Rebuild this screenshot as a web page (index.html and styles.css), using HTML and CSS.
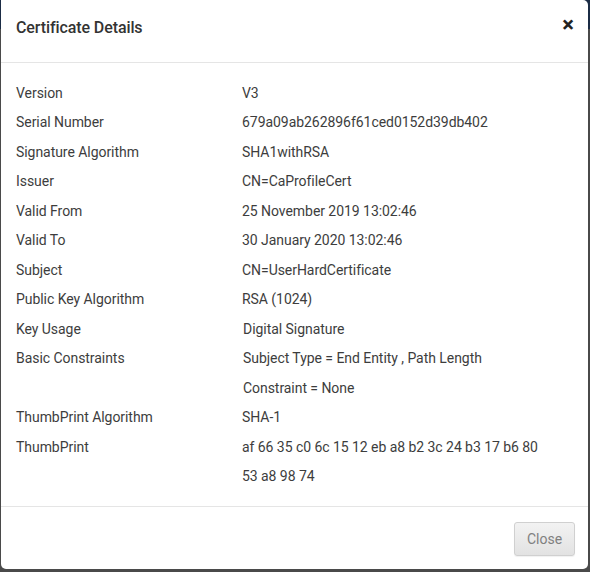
FILE: index.html
```html
<!DOCTYPE html>
<html>
<head>
<meta charset="utf-8">
<link rel="stylesheet" href="styles.css">
</head>
<body>
<div class="backdrop">
  <div class="modal">
    <div class="modal-header">
      <h4 class="title">Certificate Details</h4>
      <span class="close">&times;</span>
    </div>
    <div class="modal-body">
      <div class="row"><div class="label">Version</div><div class="value">V3</div></div>
      <div class="row"><div class="label">Serial Number</div><div class="value">679a09ab262896f61ced0152d39db402</div></div>
      <div class="row"><div class="label">Signature Algorithm</div><div class="value">SHA1withRSA</div></div>
      <div class="row"><div class="label">Issuer</div><div class="value">CN=CaProfileCert</div></div>
      <div class="row"><div class="label">Valid From</div><div class="value">25 November 2019 13:02:46</div></div>
      <div class="row"><div class="label">Valid To</div><div class="value">30 January 2020 13:02:46</div></div>
      <div class="row"><div class="label">Subject</div><div class="value">CN=UserHardCertificate</div></div>
      <div class="row"><div class="label">Public Key Algorithm</div><div class="value">RSA (1024)</div></div>
      <div class="row"><div class="label">Key Usage</div><div class="value indent">Digital Signature</div></div>
      <div class="row"><div class="label">Basic Constraints</div><div class="value indent">Subject Type = End Entity , Path Length</div></div>
      <div class="row"><div class="label"></div><div class="value indent">Constraint = None</div></div>
      <div class="row"><div class="label">ThumbPrint Algorithm</div><div class="value">SHA-1</div></div>
      <div class="row"><div class="label">ThumbPrint</div><div class="value">af 66 35 c0 6c 15 12 eb a8 b2 3c 24 b3 17 b6 80</div></div>
      <div class="row"><div class="label"></div><div class="value">53 a8 98 74</div></div>
    </div>
    <div class="modal-footer">
      <button class="btn">Close</button>
    </div>
  </div>
</div>
</body>
</html>
```
FILE: styles.css
```css
html, body {
  margin: 0;
  padding: 0;
  width: 590px;
  height: 572px;
  overflow: hidden;
}
body {
  background: linear-gradient(to bottom, #1b2c45 0, #1b2c45 29px, #4a4a4a 29px, #4a4a4a 100%);
  font-family: Roboto, "Liberation Sans", sans-serif;
  color: #3d3d3d;
}
.backdrop {
  padding: 0 2px 3px 1px;
  height: 572px;
  box-sizing: border-box;
}
.modal {
  background: #fff;
  height: 569px;
  border-radius: 0 5px 5px 5px;
  display: flex;
  flex-direction: column;
  box-sizing: border-box;
}
.modal-header {
  height: 63px;
  box-sizing: border-box;
  border-bottom: 1px solid #e5e5e5;
  display: flex;
  justify-content: space-between;
  align-items: flex-start;
  padding: 18px 14px 0 15px;
}
.title {
  margin: 0;
  font-size: 16px;
  font-weight: 500;
  color: #333;
  line-height: 20px;
  letter-spacing: -0.1px;
}
.close {
  font-size: 22px;
  font-weight: 700;
  color: #222;
  line-height: 16px;
  margin-top: -1px;
}
.modal-body {
  padding: 15px 15px;
  flex: 1;
}
.row {
  display: flex;
  height: 29.5px;
  align-items: center;
  font-size: 14px;
  line-height: 20px;
  letter-spacing: -0.05px;
}
.label {
  width: 226px;
  flex: none;
}
.value.indent {
  padding-left: 1px;
}
.modal-footer {
  height: 63px;
  box-sizing: border-box;
  border-top: 1px solid #e5e5e5;
  display: flex;
  justify-content: flex-end;
  align-items: flex-start;
  padding: 15px 13px 0 0;
}
.btn {
  width: 61px;
  height: 34px;
  border: 1px solid #d0d0d0;
  border-radius: 3px;
  background: linear-gradient(to bottom, #f2f2f2, #e2e2e2);
  color: #808080;
  font-family: Roboto, "Liberation Sans", sans-serif;
  font-size: 14px;
  padding: 0;
  box-shadow: 0 1px 1px rgba(0,0,0,0.06);
}
```
